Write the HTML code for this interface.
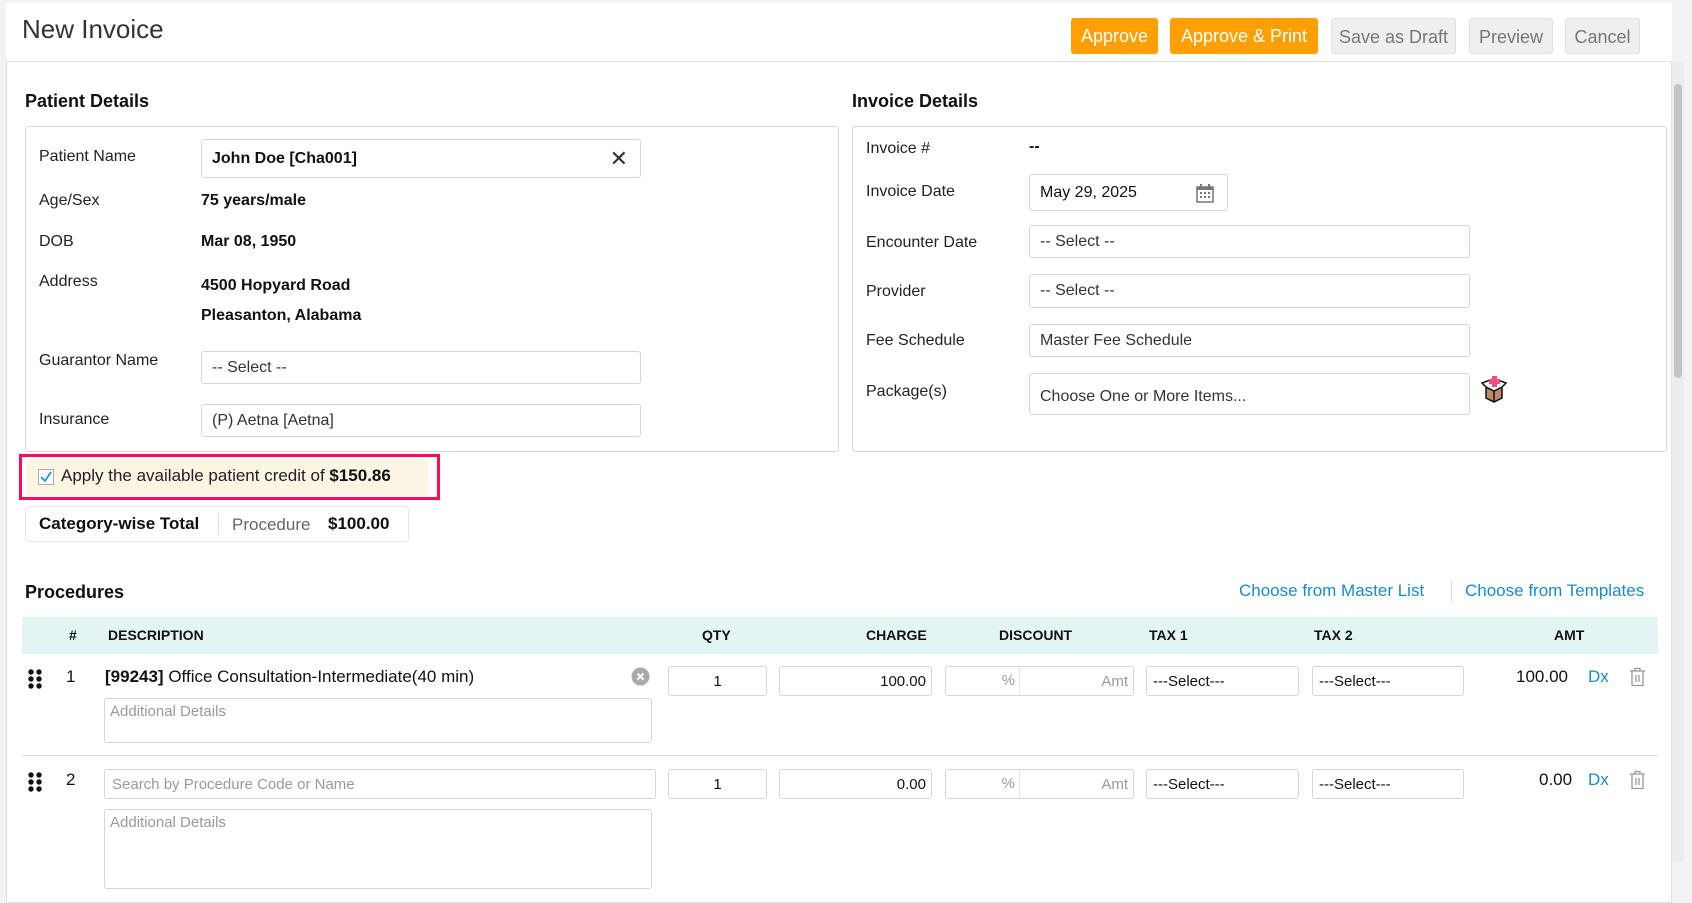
<!DOCTYPE html>
<html><head><meta charset="utf-8"><style>
*{box-sizing:border-box;margin:0;padding:0}
body{width:1692px;height:851px;overflow:hidden;background:#f3f3f5;font-family:"Liberation Sans",sans-serif;color:#111;position:relative}
.a{position:absolute}
.frame{left:6px;top:3px;width:1666px;height:900px;background:#fff;border:1px solid #e0e0e0}
.hdr{left:6px;top:3px;width:1666px;height:59px;border-bottom:1px solid #e2e2e2;background:#fff}
.btn{position:absolute;top:18px;height:36px;border-radius:3px;font-size:18px;line-height:36px;text-align:center}
.or{background:#ffa000;color:#fff}
.gr{background:#efefef;color:#777;border:1px solid #e0e0e0}
h2{position:absolute;font-size:18px;font-weight:bold}
.box{position:absolute;border:1px solid #d6d6d6;border-radius:3px;background:#fff}
.lbl{position:absolute;font-size:16px;color:#222}
.val{position:absolute;font-size:16px;font-weight:bold;color:#111}
.inp{position:absolute;border:1px solid #d6d6d6;border-radius:3px;background:#fff;font-size:16px;padding-left:10px;color:#333;display:flex;align-items:center}
.th{position:absolute;top:627px;font-size:14px;font-weight:bold;color:#111}
.ci{position:absolute;border:1px solid #d6d6d6;border-radius:3px;background:#fff;font-size:15px;display:flex;align-items:center}
.ph{color:#999}
.dots{position:absolute;width:14px;height:20px}
</style></head><body>
<div class="a frame"></div>
<div class="a hdr"></div>
<div class="a" style="left:22px;top:14px;font-size:26px;color:#333">New Invoice</div>
<div class="btn or" style="left:1071px;width:87px">Approve</div>
<div class="btn or" style="left:1170px;width:148px">Approve &amp; Print</div>
<div class="btn gr" style="left:1331px;width:125px">Save as Draft</div>
<div class="btn gr" style="left:1469px;width:84px">Preview</div>
<div class="btn gr" style="left:1565px;width:75px">Cancel</div>
<div class="a" style="left:1672px;top:62px;width:12px;height:800px;background:#ececec"></div>
<div class="a" style="left:1674px;top:84px;width:8px;height:294px;background:#c4c4c4;border-radius:4px"></div>

<h2 style="left:25px;top:91px">Patient Details</h2>
<div class="box" style="left:25px;top:126px;width:814px;height:326px"></div>
<div class="lbl" style="left:39px;top:148px">Patient Name</div>
<div class="inp" style="left:201px;top:139px;width:440px;height:39px;font-weight:bold;color:#111">John Doe [Cha001]<span style="position:absolute;right:12px;font-weight:normal;font-size:22px;color:#333">✕</span></div>
<div class="lbl" style="left:39px;top:192px">Age/Sex</div><div class="val" style="left:201px;top:192px">75 years/male</div>
<div class="lbl" style="left:39px;top:233px">DOB</div><div class="val" style="left:201px;top:233px">Mar 08, 1950</div>
<div class="lbl" style="left:39px;top:273px">Address</div><div class="val" style="left:201px;top:277px">4500 Hopyard Road</div><div class="val" style="left:201px;top:307px">Pleasanton, Alabama</div>
<div class="lbl" style="left:39px;top:352px">Guarantor Name</div>
<div class="inp" style="left:201px;top:351px;width:440px;height:33px">-- Select --</div>
<div class="lbl" style="left:39px;top:411px">Insurance</div>
<div class="inp" style="left:201px;top:404px;width:440px;height:33px">(P) Aetna [Aetna]</div>

<h2 style="left:852px;top:91px">Invoice Details</h2>
<div class="box" style="left:852px;top:126px;width:815px;height:326px"></div>
<div class="lbl" style="left:866px;top:140px">Invoice #</div><div class="val" style="left:1029px;top:138px">--</div>
<div class="lbl" style="left:866px;top:183px">Invoice Date</div>
<div class="inp" style="left:1029px;top:174px;width:199px;height:37px;color:#111">May 29, 2025
<svg style="position:absolute;right:12px;top:8px" width="20" height="20" viewBox="0 0 20 20"><rect x="2" y="4" width="16" height="15" fill="none" stroke="#777" stroke-width="1.5"/><rect x="2" y="4" width="16" height="3" fill="#777"/><rect x="5" y="1" width="2" height="5" fill="#777"/><rect x="13" y="1" width="2" height="5" fill="#777"/><g fill="#777"><rect x="5" y="9" width="2" height="2"/><rect x="9" y="9" width="2" height="2"/><rect x="13" y="9" width="2" height="2"/><rect x="5" y="13" width="2" height="2"/><rect x="9" y="13" width="2" height="2"/><rect x="13" y="13" width="2" height="2"/></g></svg></div>
<div class="lbl" style="left:866px;top:234px">Encounter Date</div>
<div class="inp" style="left:1029px;top:225px;width:441px;height:33px">-- Select --</div>
<div class="lbl" style="left:866px;top:283px">Provider</div>
<div class="inp" style="left:1029px;top:274px;width:441px;height:34px">-- Select --</div>
<div class="lbl" style="left:866px;top:332px">Fee Schedule</div>
<div class="inp" style="left:1029px;top:324px;width:441px;height:33px">Master Fee Schedule</div>
<div class="lbl" style="left:866px;top:383px">Package(s)</div>
<div class="inp" style="left:1029px;top:373px;width:441px;height:42px;padding-top:6px">Choose One or More Items...</div>
<svg class="a" style="left:1480px;top:374px" width="28" height="30" viewBox="0 0 28 30"><path d="M6 13 L14 17 L22 13 L22 24 L14 28 L6 24Z" fill="#c08a6a" stroke="#111" stroke-width="1.5"/><path d="M14 17V28" stroke="#111" stroke-width="1.5"/><path d="M6 13 L2 9 L10 6 L14 10 L18 6 L26 9 L22 13 L14 17Z" fill="#fff" stroke="#111" stroke-width="1.5"/><rect x="12" y="2" width="5" height="11" fill="#f0507a"/><rect x="9" y="5" width="11" height="5" fill="#f0507a"/></svg>

<div class="a" style="left:19px;top:454px;width:421px;height:46px;border:3px solid #ff0a54"></div>
<div class="a" style="left:26px;top:459px;width:402px;height:36px;background:#fdf5e4;border-radius:4px"></div>
<div class="a" style="left:38px;top:469px;width:16px;height:16px;border:1px solid #aaa;background:#fff"><svg width="14" height="14" viewBox="0 0 14 14"><path d="M2 7 L6 11 L12 2" fill="none" stroke="#1a8bc8" stroke-width="1.6"/></svg></div>
<div class="a" style="left:61px;top:466px;font-size:17px;color:#222">Apply the available patient credit of <b style="color:#111">$150.86</b></div>

<div class="a" style="left:25px;top:506px;width:384px;height:36px;border:1px solid #e6e6e6;border-radius:4px"></div>
<div class="a" style="left:39px;top:514px;font-size:17px;font-weight:bold">Category-wise Total</div>
<div class="a" style="left:218px;top:513px;width:1px;height:22px;background:#ddd"></div>
<div class="a" style="left:232px;top:515px;font-size:17px;color:#666">Procedure</div>
<div class="a" style="left:328px;top:514px;font-size:17px;font-weight:bold">$100.00</div>

<h2 style="left:25px;top:582px">Procedures</h2>
<div class="a" style="left:1239px;top:581px;font-size:17px;color:#1a8bc8">Choose from Master List</div>
<div class="a" style="left:1451px;top:580px;width:1px;height:22px;background:#ddd"></div>
<div class="a" style="left:1465px;top:581px;font-size:17px;color:#1a8bc8">Choose from Templates</div>

<div class="a" style="left:22px;top:617px;width:1636px;height:37px;background:#e3f4f5"></div>
<div class="th" style="left:69px">#</div>
<div class="th" style="left:108px">DESCRIPTION</div>
<div class="th" style="left:702px">QTY</div>
<div class="th" style="left:866px">CHARGE</div>
<div class="th" style="left:999px">DISCOUNT</div>
<div class="th" style="left:1149px">TAX 1</div>
<div class="th" style="left:1314px">TAX 2</div>
<div class="th" style="left:1554px">AMT</div>

<svg class="dots" style="left:28px;top:669px" viewBox="0 0 14 20"><g fill="#111"><circle cx="3" cy="3" r="2.7"/><circle cx="11" cy="3" r="2.7"/><circle cx="3" cy="10" r="2.7"/><circle cx="11" cy="10" r="2.7"/><circle cx="3" cy="17" r="2.7"/><circle cx="11" cy="17" r="2.7"/></g></svg>
<div class="a" style="left:66px;top:667px;font-size:17px">1</div>
<div class="a" style="left:105px;top:667px;font-size:17px"><b>[99243]</b> Office Consultation-Intermediate(40 min)</div>
<svg class="a" style="left:631px;top:667px" width="19" height="19" viewBox="0 0 19 19"><circle cx="9.5" cy="9.5" r="9" fill="#aaa"/><path d="M6.5 6.5L12.5 12.5M12.5 6.5L6.5 12.5" stroke="#fff" stroke-width="2"/></svg>
<div class="ci" style="left:104px;top:698px;width:548px;height:45px;align-items:flex-start;padding:4px 5px"><span class="ph">Additional Details</span></div>
<div class="ci" style="left:668px;top:666px;width:99px;height:30px;justify-content:center">1</div>
<div class="ci" style="left:779px;top:666px;width:153px;height:30px;justify-content:flex-end;padding-right:5px">100.00</div>
<div class="ci" style="left:945px;top:666px;width:189px;height:30px"><span class="ph" style="width:74px;text-align:right;padding-right:4px;border-right:1px solid #e3e3e3;height:100%;line-height:28px">%</span><span class="ph" style="flex:1;text-align:right;padding-right:5px">Amt</span></div>
<div class="ci" style="left:1146px;top:666px;width:153px;height:30px;padding-left:6px">---Select---</div>
<div class="ci" style="left:1312px;top:666px;width:152px;height:30px;padding-left:6px">---Select---</div>
<div class="a" style="left:1516px;top:667px;font-size:17px">100.00</div>
<div class="a" style="left:1588px;top:667px;font-size:17px;color:#1a8bc8">Dx</div>
<svg class="a" style="left:1629px;top:667px" width="17" height="20" viewBox="0 0 17 20"><path d="M1 4H16M6 4V1.5H11V4M3 4V18.5H14V4M7 8V15M10 8V15" fill="none" stroke="#999" stroke-width="1.3"/></svg>

<div class="a" style="left:22px;top:755px;width:1636px;height:1px;background:#d3e3e6"></div>

<svg class="dots" style="left:28px;top:772px" viewBox="0 0 14 20"><g fill="#111"><circle cx="3" cy="3" r="2.7"/><circle cx="11" cy="3" r="2.7"/><circle cx="3" cy="10" r="2.7"/><circle cx="11" cy="10" r="2.7"/><circle cx="3" cy="17" r="2.7"/><circle cx="11" cy="17" r="2.7"/></g></svg>
<div class="a" style="left:66px;top:770px;font-size:17px">2</div>
<div class="ci" style="left:104px;top:769px;width:552px;height:30px;padding-left:7px"><span class="ph">Search by Procedure Code or Name</span></div>
<div class="ci" style="left:104px;top:809px;width:548px;height:80px;align-items:flex-start;padding:4px 5px"><span class="ph">Additional Details</span></div>
<div class="ci" style="left:668px;top:769px;width:99px;height:30px;justify-content:center">1</div>
<div class="ci" style="left:779px;top:769px;width:153px;height:30px;justify-content:flex-end;padding-right:5px">0.00</div>
<div class="ci" style="left:945px;top:769px;width:189px;height:30px"><span class="ph" style="width:74px;text-align:right;padding-right:4px;border-right:1px solid #e3e3e3;height:100%;line-height:28px">%</span><span class="ph" style="flex:1;text-align:right;padding-right:5px">Amt</span></div>
<div class="ci" style="left:1146px;top:769px;width:153px;height:30px;padding-left:6px">---Select---</div>
<div class="ci" style="left:1312px;top:769px;width:152px;height:30px;padding-left:6px">---Select---</div>
<div class="a" style="left:1539px;top:770px;font-size:17px">0.00</div>
<div class="a" style="left:1588px;top:770px;font-size:17px;color:#1a8bc8">Dx</div>
<svg class="a" style="left:1629px;top:770px" width="17" height="20" viewBox="0 0 17 20"><path d="M1 4H16M6 4V1.5H11V4M3 4V18.5H14V4M7 8V15M10 8V15" fill="none" stroke="#999" stroke-width="1.3"/></svg>
</body></html>
